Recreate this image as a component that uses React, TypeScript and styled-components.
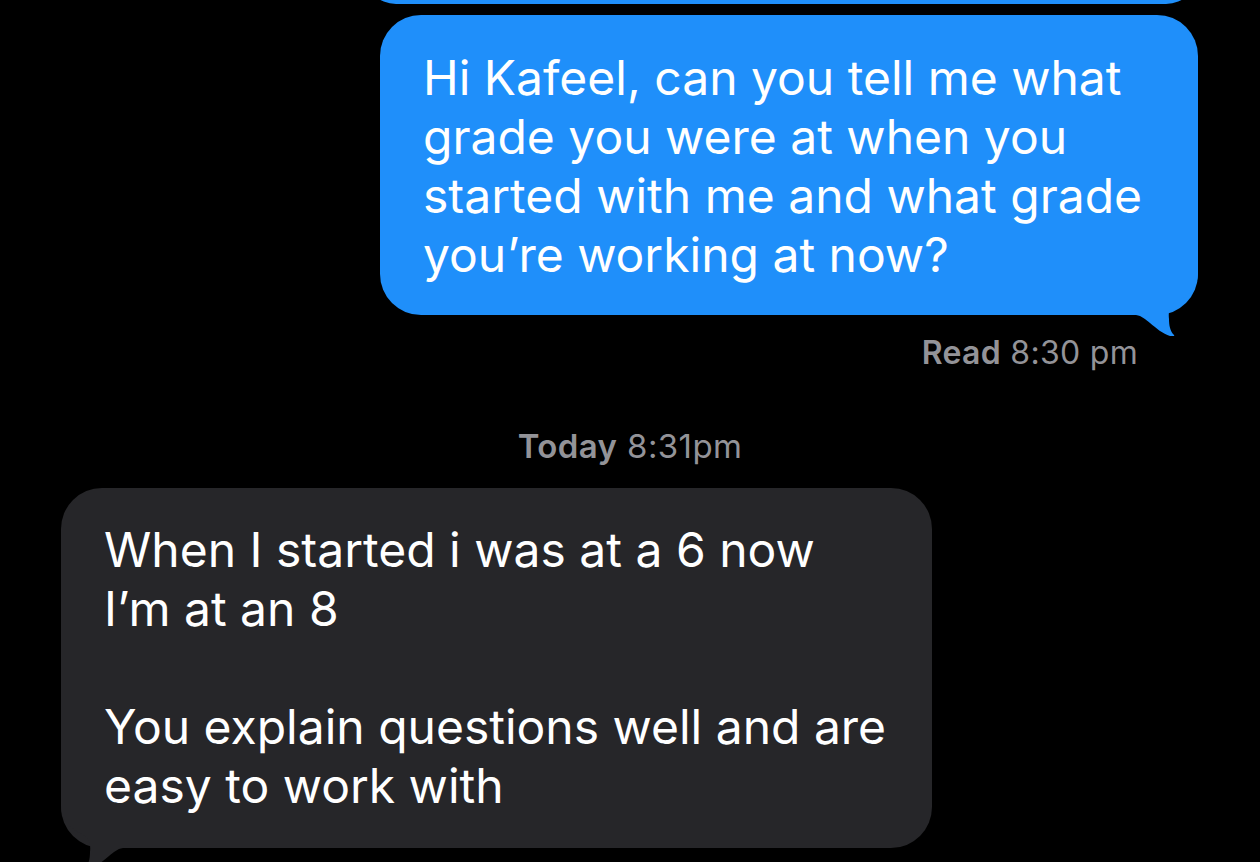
import React from "react";
import styled, { createGlobalStyle, css } from "styled-components";

const Global = createGlobalStyle`
  html {
    background: #000;
  }
  html, body {
    margin: 0;
    padding: 0;
    height: 862px;
    overflow: hidden;
  }
  body {
    font-family: Inter, "Noto Sans", "Liberation Sans", sans-serif;
    -webkit-font-smoothing: antialiased;
  }
`;

const BLUE = "#1f8ffa";
const GRAY = "#262629";

type Side = "sent" | "received";

const Thread = styled.div`
  display: flex;
  flex-direction: column;
  width: 1260px;
`;

const Row = styled.div<{ $side: Side }>`
  display: flex;
  justify-content: ${(p) => (p.$side === "sent" ? "flex-end" : "flex-start")};
  padding: 0 62px 0 61px;
`;

const Bubble = styled.div<{ $side: Side; $width: number }>`
  position: relative;
  box-sizing: border-box;
  width: ${(p) => p.$width}px;
  border-radius: 41px;
  color: #fff;
  font-size: 48px;
  line-height: 59px;
  white-space: pre-line;
  ${(p) =>
    p.$side === "sent"
      ? css`
          background: ${BLUE};
          padding: 33px 40px 31px 43px;
        `
      : css`
          background: ${GRAY};
          padding: 32px 40px 33px 43px;
        `}
`;

const BubbleText = styled.span`
  position: relative;
`;

const PrevBubble = styled(Bubble)`
  height: 64px;
  margin-top: -60px;
  margin-bottom: 11px;
`;

const TailSvg = styled.svg<{ $side: Side }>`
  position: absolute;
  bottom: -21px;
  width: 68px;
  height: 71px;
  ${(p) =>
    p.$side === "sent"
      ? css`
          right: 0;
        `
      : css`
          left: 0;
          transform: scaleX(-1);
        `}
`;

const Tail = ({ side }: { side: Side }) => (
  <TailSvg $side={side} viewBox="0 0 68 71">
    <path
      d="M68 0 L68 8 C68 22 60 30 47 36 C40 40 38 46 39 54 C39 60 40 66 44 70 C45 71 43 72 40 71 C33 69 26 63 20 58 C15 54 12 51 6 50 L0 50 L0 0 Z"
      fill={side === "sent" ? BLUE : GRAY}
    />
  </TailSvg>
);

const Receipt = styled.div`
  align-self: flex-end;
  margin: 20px 122px 0 0;
  color: #939398;
  font-size: 32px;
  line-height: 36px;
  letter-spacing: 0.3px;
`;

const Stamp = styled.div`
  align-self: center;
  margin: 57px 0 24px;
  color: #939398;
  font-size: 33px;
  line-height: 36px;
  letter-spacing: 0.4px;
`;

const Strong = styled.span`
  font-weight: 600;
`;

export default function App() {
  return (
    <>
      <Global />
      <Thread>
        <Row $side="sent">
          <PrevBubble $side="sent" $width={834} />
        </Row>
        <Row $side="sent">
          <Bubble $side="sent" $width={818}>
            <Tail side="sent" />
            <BubbleText>
              {"Hi Kafeel, can you tell me what\ngrade you were at when you\nstarted with me and what grade\nyou’re working at now?"}
            </BubbleText>
          </Bubble>
        </Row>
        <Receipt>
          <Strong>Read</Strong> 8:30 pm
        </Receipt>
        <Stamp>
          <Strong>Today</Strong> 8:31pm
        </Stamp>
        <Row $side="received">
          <Bubble $side="received" $width={871}>
            <Tail side="received" />
            <BubbleText>
              {"When I started i was at a 6 now\nI’m at an 8\n\nYou explain questions well and are\neasy to work with"}
            </BubbleText>
          </Bubble>
        </Row>
      </Thread>
    </>
  );
}
